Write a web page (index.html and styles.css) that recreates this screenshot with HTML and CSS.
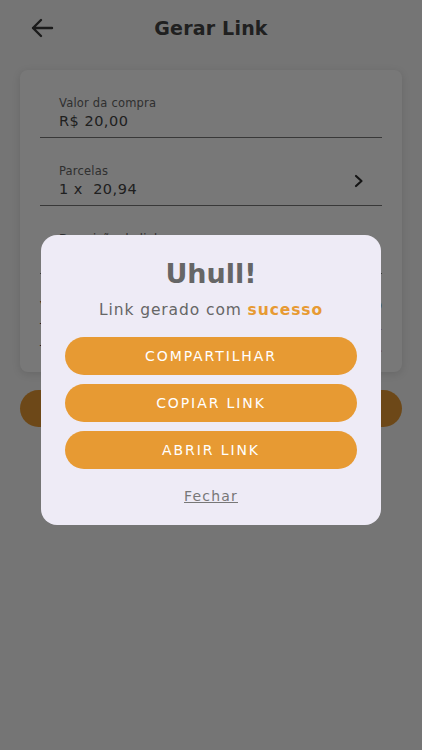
FILE: index.html
```html
<!DOCTYPE html>
<html lang="pt-BR">
<head>
    <meta charset="UTF-8">
    <meta name="viewport" content="width=device-width, initial-scale=1.0">
    <title>Gerar Link</title>
    <link rel="stylesheet" href="styles.css">
</head>
<body>
    <div class="screen">
        <header class="top-bar">
            <button class="back-button" aria-label="Voltar">
                <svg width="24" height="20" viewBox="0 0 24 20">
                    <path d="M22 10H3 M11 2L3 10L11 18" fill="none" stroke="#3a3a3a" stroke-width="2.4" stroke-linecap="round" stroke-linejoin="round"/>
                </svg>
            </button>
            <h1 class="page-title">Gerar Link</h1>
        </header>

        <section class="form-card">
            <div class="field">
                <span class="field-label">Valor da compra</span>
                <span class="field-value">R$ 20,00</span>
            </div>
            <div class="field field-select">
                <div class="field-text">
                    <span class="field-label">Parcelas</span>
                    <span class="field-value">1 x&nbsp; 20,94</span>
                </div>
                <svg class="chevron" width="10" height="14" viewBox="0 0 10 14">
                    <path d="M2 2L7.5 7L2 12" fill="none" stroke="#2e2e2e" stroke-width="2.2" stroke-linecap="round" stroke-linejoin="round"/>
                </svg>
            </div>
            <div class="field">
                <span class="field-label">Descrição do link</span>
                <span class="field-value">&nbsp;</span>
            </div>
            <div class="summary">
                <div class="summary-row"><span>Valor</span><span>R$ 20,00</span></div>
                <div class="summary-row"><span>Taxa</span><span class="fee">R$ 0,94</span></div>
                <div class="summary-row"><span>Total</span><span class="total">R$ 20,94</span></div>
            </div>
        </section>

        <button class="main-button" aria-label="Gerar link"></button>
    </div>

    <div class="overlay">
        <div class="modal">
            <h2 class="modal-title">Uhull!</h2>
            <p class="modal-text">Link gerado com <strong>sucesso</strong></p>
            <button class="pill-button">COMPARTILHAR</button>
            <button class="pill-button">COPIAR LINK</button>
            <button class="pill-button">ABRIR LINK</button>
            <button class="close-link">Fechar</button>
        </div>
    </div>
</body>
</html>
```

FILE: styles.css
```css
body {
    margin: 0;
    font-family: "DejaVu Sans", "Open Sans", sans-serif;
    background-color: #f8f8f8;
    color: #555;
}
.screen {
    width: 422px;
    height: 750px;
    padding: 0 20px;
    box-sizing: border-box;
}
.top-bar {
    display: flex;
    align-items: center;
    justify-content: center;
    position: relative;
    height: 56px;
    margin-bottom: 14px;
}
.back-button {
    position: absolute;
    left: 10px;
    top: 18px;
    background: none;
    border: none;
    padding: 0;
    display: flex;
}
.page-title {
    margin: 0;
    font-size: 19px;
    font-weight: 700;
    color: #444;
    letter-spacing: 0.2px;
}
.form-card {
    background-color: #fff;
    border-radius: 8px;
    box-shadow: 0 2px 8px rgba(0, 0, 0, 0.12);
    padding: 25px 20px 22px;
    height: 302px;
    box-sizing: border-box;
}
.field {
    display: flex;
    flex-direction: column;
    padding: 0 19px 6px;
    border-bottom: 1px solid #777;
    margin-bottom: 25px;
}
.field-select {
    flex-direction: row;
    align-items: center;
    justify-content: space-between;
    padding-right: 18px;
}
.field-text {
    display: flex;
    flex-direction: column;
}
.field-label {
    font-size: 11.5px;
    color: #666;
    letter-spacing: 0.2px;
    line-height: 16px;
}
.field-value {
    font-size: 14.5px;
    color: #444;
    letter-spacing: 0.5px;
    line-height: 20px;
}
.summary {
    display: flex;
    flex-direction: column;
    gap: 4px;
    margin-top: -2px;
}
.summary-row {
    display: flex;
    justify-content: space-between;
    font-size: 13px;
    line-height: 18px;
    color: #333;
}
.fee {
    color: #c0392b;
}
.total {
    color: #e79a33;
    font-weight: 700;
}
.main-button {
    display: block;
    width: 100%;
    height: 37px;
    margin-top: 18px;
    border: none;
    border-radius: 19px;
    background-color: #e79a33;
}
.overlay {
    position: fixed;
    inset: 0;
    background-color: rgba(0, 0, 0, 0.53);
    display: flex;
    justify-content: center;
    align-items: center;
}
.modal {
    width: 340px;
    margin-top: 9px;
    box-sizing: border-box;
    background-color: #eeebf6;
    border-radius: 16px;
    padding: 22px 24px 19px;
    display: flex;
    flex-direction: column;
    align-items: stretch;
    text-align: center;
}
.modal-title {
    margin: 0;
    font-size: 27px;
    line-height: 34px;
    font-weight: 700;
    color: #666;
}
.modal-text {
    margin: 8px 0 16px;
    font-size: 15.5px;
    line-height: 22px;
    color: #666;
    letter-spacing: 0.9px;
}
.modal-text strong {
    color: #e79a33;
    font-weight: 700;
}
.pill-button {
    height: 38px;
    margin-bottom: 9px;
    border: none;
    border-radius: 19px;
    background-color: #e79a33;
    color: #fff;
    font-family: inherit;
    font-size: 14px;
    letter-spacing: 1.9px;
}
.close-link {
    align-self: center;
    margin-top: 8px;
    background: none;
    border: none;
    padding: 0;
    font-family: inherit;
    font-size: 14px;
    line-height: 20px;
    color: #777;
    text-decoration: underline;
    letter-spacing: 1.2px;
}
```
